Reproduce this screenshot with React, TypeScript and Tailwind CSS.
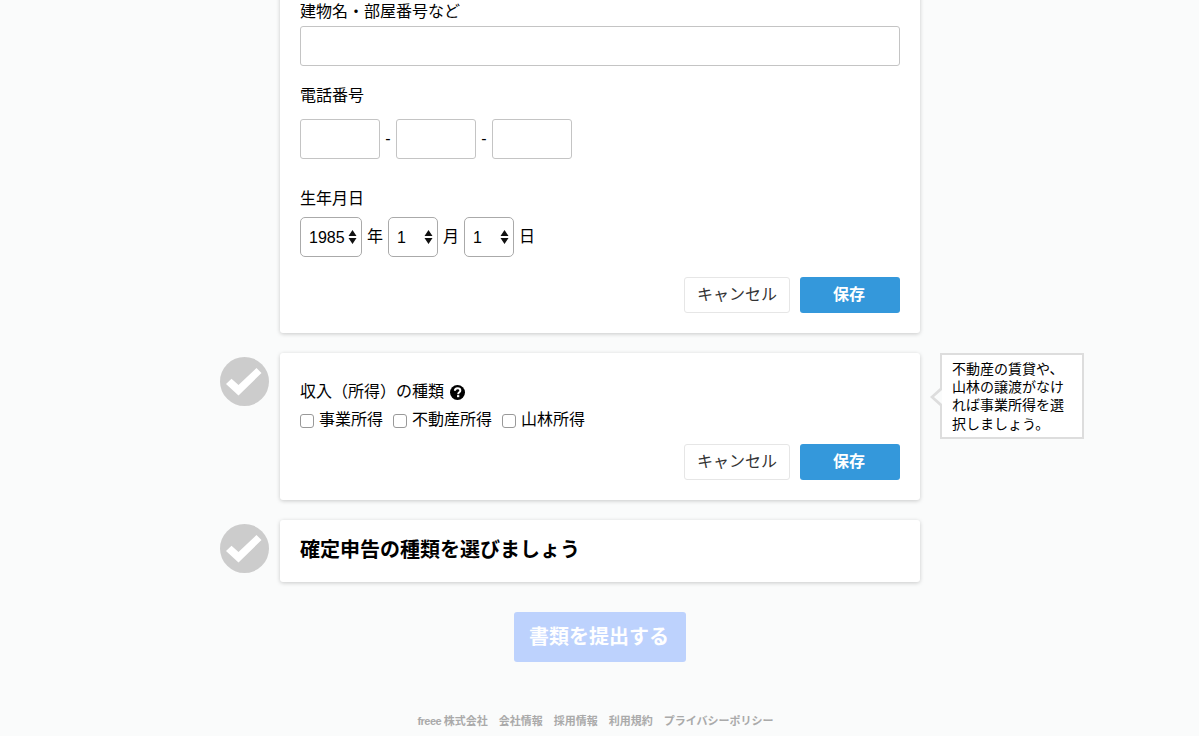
import React from "react";

function Check() {
  return (
    <div className="absolute left-[-60px] top-[4px] w-[49px] h-[49px]">
      <svg viewBox="0 0 49 49" className="w-[49px] h-[49px]">
        <circle cx="24.5" cy="24.5" r="24.5" fill="#cccccc" />
        <polygon points="6,27 11.5,21.7 18.5,28 36.5,11 41.5,16 18.5,38.5" fill="#ffffff" />
      </svg>
    </div>
  );
}

function Actions() {
  return (
    <div className="flex justify-end gap-[10px]">
      <button className="w-[106px] h-[36px] bg-white border border-[#e6e6e6] rounded-[3px] text-[16px] text-[#333333]">キャンセル</button>
      <button className="w-[100px] h-[36px] bg-[#3498db] rounded-[3px] text-[16px] font-bold text-white pr-[2px]">保存</button>
    </div>
  );
}

function Sel({ w, value, options }: { w: string; value: string; options: string[] }) {
  return (
    <div className={`relative ${w} h-[40px]`}>
      <select defaultValue={value} className="appearance-none w-full h-full bg-white border border-[#aaaaaa] rounded-[5px] pl-[8px] pt-[2px] text-[16px] text-black outline-none">
        {options.map((o) => (
          <option key={o}>{o}</option>
        ))}
      </select>
      <svg viewBox="0 0 8 14" className="absolute right-[5px] top-[13px] w-[9px] h-[14px] pointer-events-none">
        <path d="M4 0 L8 6 L0 6 Z M0 8 L8 8 L4 14 Z" fill="#111111" />
      </svg>
    </div>
  );
}

function Tb({ w }: { w: string }) {
  return <input className={`${w} h-[40px] bg-white border border-[#c4c4c4] rounded-[3px]`} />;
}

function Box({ label }: { label: string }) {
  return (
    <label className="flex items-center gap-[5px] text-[16px] leading-[20px]">
      <input type="checkbox" className="appearance-none w-[14px] h-[14px] mt-[2px] bg-white border border-[#999999] rounded-[3px]" />
      {label}
    </label>
  );
}

export default function App() {
  return (
    <div className="h-[736px] overflow-hidden bg-[#fafbfb] text-black font-['Liberation_Sans','Noto_Sans_CJK_JP',sans-serif]">
      <div className="w-[640px] ml-[280px] flex flex-col mt-[-20px]">
        <section className="relative bg-white rounded-[3px] shadow-[0_1px_4px_rgba(0,0,0,0.2)] px-[20px] h-[353px]">
          <div className="text-[16px] leading-[24px] pt-[20px]">建物名・部屋番号など</div>
          <input className="block w-[600px] h-[40px] mt-[2px] bg-white border border-[#c4c4c4] rounded-[3px]" />
          <div className="text-[16px] leading-[24px] mt-[18px]">電話番号</div>
          <div className="flex items-center mt-[11px]">
            <Tb w="w-[80px]" />
            <span className="w-[16px] text-center text-[16px]">-</span>
            <Tb w="w-[80px]" />
            <span className="w-[16px] text-center text-[16px]">-</span>
            <Tb w="w-[80px]" />
          </div>
          <div className="text-[16px] leading-[24px] mt-[28px]">生年月日</div>
          <div className="flex items-center mt-[6px] text-[16px]">
            <Sel w="w-[62px]" value="1985" options={["1985"]} />
            <span className="mx-[5px]">年</span>
            <Sel w="w-[50px]" value="1" options={["1"]} />
            <span className="mx-[5px]">月</span>
            <Sel w="w-[50px]" value="1" options={["1"]} />
            <span className="ml-[5px]">日</span>
          </div>
          <div className="mt-[20px]">
            <Actions />
          </div>
        </section>

        <section className="relative mt-[20px] bg-white rounded-[3px] shadow-[0_1px_4px_rgba(0,0,0,0.2)] px-[20px] h-[147px]">
          <Check />
          <div className="flex items-center gap-[6px] text-[16px] leading-[24px] pt-[27px]">
            収入（所得）の種類
            <svg viewBox="0 0 16 16" className="w-[15px] h-[15px]">
              <circle cx="8" cy="8" r="8" fill="#000000" />
              <path d="M5.2 6.2 C5.2 4.5 6.5 3.5 8.1 3.5 C9.8 3.5 11 4.5 11 6 C11 7.9 8.7 7.8 8.7 9.8" fill="none" stroke="#ffffff" strokeWidth="2.1" />
              <rect x="7.5" y="10.8" width="2.4" height="2.2" fill="#ffffff" />
            </svg>
          </div>
          <div className="flex items-center gap-[10px] mt-[6px]">
            <Box label="事業所得" />
            <Box label="不動産所得" />
            <Box label="山林所得" />
          </div>
          <div className="mt-[14px]">
            <Actions />
          </div>
          <div className="absolute left-[660px] top-0 w-[144px] h-[86px] bg-white border-[2px] border-[#dddddd] pl-[10px] pr-[10px] pt-[5px] text-[14px] leading-[18.2px] text-black">
            不動産の賃貸や、山林の譲渡がなければ事業所得を選択しましょう。
            <span className="absolute left-[-12px] top-[33px] w-0 h-0 border-y-[9px] border-y-transparent border-r-[10px] border-r-[#dddddd]" />
            <span className="absolute left-[-8px] top-[35px] w-0 h-0 border-y-[7px] border-y-transparent border-r-[8px] border-r-[#fafbfb]" />
          </div>
        </section>

        <section className="relative mt-[20px] bg-white rounded-[3px] shadow-[0_1px_4px_rgba(0,0,0,0.2)] px-[20px] h-[62px] flex items-center">
          <Check />
          <h2 className="text-[20px] font-bold mt-[-2px]">確定申告の種類を選びましょう</h2>
        </section>

        <div className="flex justify-center mt-[30px]">
          <button className="w-[172px] h-[50px] bg-[#bdd2fd] rounded-[3px] text-[20px] font-bold text-white pr-[2px]">書類を提出する</button>
        </div>

        <footer className="flex justify-center gap-[11px] mt-[50px] ml-[-9px] text-[11px] leading-[18px] font-bold text-[#aaaaaa]">
          <span><span className="tracking-[-0.5px]">freee </span>株式会社</span>
          <span>会社情報</span>
          <span>採用情報</span>
          <span>利用規約</span>
          <span>プライバシーポリシー</span>
        </footer>
      </div>
    </div>
  );
}
